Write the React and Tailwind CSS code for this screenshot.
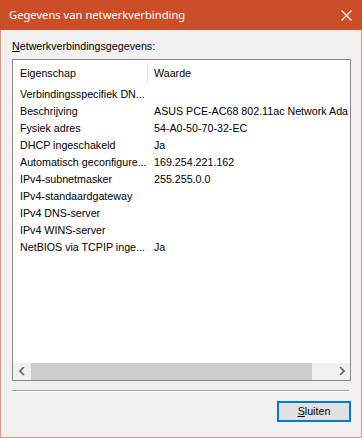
import React from 'react'

const rows = [
  ['Verbindingsspecifiek DN...', ''],
  ['Beschrijving', 'ASUS PCE-AC68 802.11ac Network Ada'],
  ['Fysiek adres', '54-A0-50-70-32-EC'],
  ['DHCP ingeschakeld', 'Ja'],
  ['Automatisch geconfigure...', '169.254.221.162'],
  ['IPv4-subnetmasker', '255.255.0.0'],
  ['IPv4-standaardgateway', ''],
  ['IPv4 DNS-server', ''],
  ['IPv4 WINS-server', ''],
  ['NetBIOS via TCPIP inge...', 'Ja'],
]

function Chevron({ dir }) {
  const d = dir === 'left' ? 'M5 0 L1 4 L5 8' : 'M1 0 L5 4 L1 8'
  return (
    <svg width="6" height="9" viewBox="0 0 6 9" className="block">
      <path d={d} fill="none" stroke="#606060" strokeWidth="1.6" />
    </svg>
  )
}

export default function App() {
  return (
    <div className="flex h-[438px] w-[362px] flex-col font-['Liberation_Sans',Arial,sans-serif] text-[10.7px] text-black">
      {/* title bar */}
      <div className="flex h-[30px] shrink-0 items-center justify-between bg-[#cb4e28] pl-[9px] pr-[10px]">
        <span className="font-['Noto_Sans',sans-serif] text-[11.2px] leading-none text-white">Gegevens van netwerkverbinding</span>
        <svg width="11" height="11" viewBox="0 0 11 11" className="block">
          <path d="M0.5 0.5 L10.5 10.5 M10.5 0.5 L0.5 10.5" stroke="#ffffff" strokeWidth="1.1" />
        </svg>
      </div>

      <div className="flex flex-1 flex-col border-x border-b border-[#d99487] bg-[#f0f0f0] pl-[11px] pr-[10px]">
        <div className="mt-[10px] h-[13px] leading-[13px]">
          <span className="underline underline-offset-[1px]">N</span>etwerkverbindingsgegevens:
        </div>

        {/* list view */}
        <div className="mt-[6px] flex h-[322px] flex-col border border-[#828790] bg-white">
          <div className="flex h-[26px] shrink-0 items-center">
            <div className="w-[134px] pl-[7px]">Eigenschap</div>
            <div className="h-[22px] w-px bg-[#e5e5e5]" />
            <div className="pl-[6px]">Waarde</div>
          </div>
          {rows.map(([k, v]) => (
            <div key={k} className="flex h-[17px] items-center overflow-hidden whitespace-nowrap">
              <div className="w-[135px] shrink-0 pl-[7px]">{k}</div>
              <div className="pl-[6px]">{v}</div>
            </div>
          ))}
          <div className="flex-1" />
          <div className="flex h-[17px] shrink-0 items-center bg-[#f0f0f0]">
            <div className="flex w-[17px] justify-center"><Chevron dir="left" /></div>
            <div className="ml-px h-full w-[281px] bg-[#cdcdcd]" />
            <div className="flex-1" />
            <div className="flex w-[17px] justify-center"><Chevron dir="right" /></div>
          </div>
        </div>

        <div className="mt-[9px] w-[337px] border-t border-b border-t-[#a0a0a0] border-b-white" />

        <div className="mt-[9px] flex justify-end">
          <button className="h-[21px] w-[74px] border-2 border-[#0078d7] bg-[#e1e1e1] text-[10.7px] leading-none">
            <span className="underline underline-offset-[1px]">S</span>luiten
          </button>
        </div>
      </div>
    </div>
  )
}
